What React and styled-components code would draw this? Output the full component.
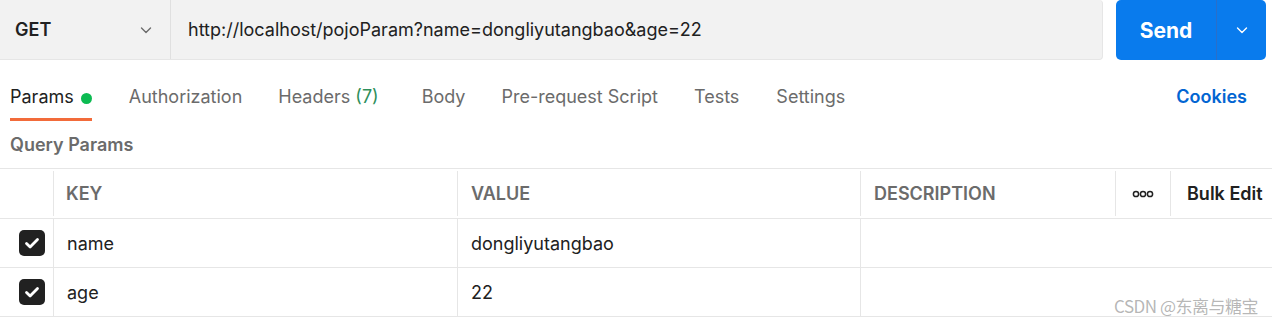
import React from "react";
import styled, { createGlobalStyle } from "styled-components";

const Global = createGlobalStyle`
  html, body { margin: 0; padding: 0; background: #fff; }
  body { font-family: Inter, "Noto Sans", "Noto Sans CJK SC", sans-serif; color: #212121; }
  * { box-sizing: border-box; }
`;

const Page = styled.div`
  width: 1272px;
  height: 322px;
  overflow: hidden;
  position: relative;
  background: #fff;
`;

const TopBar = styled.div`
  display: flex;
  align-items: stretch;
  height: 60px;
  gap: 13px;
  padding-right: 6px;
`;

const UrlBox = styled.div`
  flex: 1;
  display: flex;
  background: #f2f2f2;
  border: 1px solid #e6e6e6;
  border-left: none;
  border-top: none;
  border-radius: 0 4px 4px 0;
`;

const Method = styled.div`
  width: 171px;
  display: flex;
  align-items: center;
  justify-content: space-between;
  padding: 0 16px 0 15px;
  font-size: 18px;
  font-weight: 600;
  color: #212121;
  border-right: 1px solid #e0e0e0;
`;

const Url = styled.div`
  flex: 1;
  display: flex;
  align-items: center;
  padding-left: 17px;
  font-size: 18px;
  color: #212121;
`;

const SendGroup = styled.div`
  width: 150px;
  display: flex;
  background: #097bed;
  border-radius: 5px;
  color: #fff;
`;

const SendLabel = styled.div`
  width: 101px;
  display: flex;
  align-items: center;
  justify-content: center;
  font-size: 21px;
  font-weight: 700;
  border-right: 1px solid #2a6fc9;
`;

const SendCaret = styled.div`
  flex: 1;
  display: flex;
  align-items: center;
  justify-content: center;
`;

const Tabs = styled.div`
  display: flex;
  align-items: flex-start;
  height: 61px;
  padding: 26px 25px 0 10px;
`;

const Tab = styled.div`
  position: relative;
  height: 35px;
  margin-right: ${(p) => p.$gap}px;
  display: flex;
  align-items: flex-start;
  gap: 7px;
  font-size: 18px;
  color: ${(p) => (p.$active ? "#212121" : "#6b6b6b")};
  border-bottom: 3px solid ${(p) => (p.$active ? "#f26b3a" : "transparent")};
`;

const Dot = styled.span`
  width: 11px;
  height: 11px;
  border-radius: 50%;
  background: #0cbb52;
  margin-top: 7px;
`;

const Count = styled.span`
  color: #2f8f5b;
`;

const Spacer = styled.div`
  flex: 1;
`;

const Cookies = styled.div`
  font-size: 18px;
  font-weight: 600;
  color: #0265d2;
`;

const Section = styled.div`
  height: 47px;
  padding: 13px 0 0 10px;
  font-size: 18px;
  font-weight: 600;
  color: #6b6b6b;
`;

const Table = styled.div`
  border-top: 1px solid #e6e6e6;
`;

const Row = styled.div`
  display: grid;
  grid-template-columns: 53px 404px 403px 255px 55px 1fr;
  height: ${(p) => p.$h}px;
  border-bottom: 1px solid #e6e6e6;
`;

const Cell = styled.div`
  display: flex;
  align-items: center;
  padding-left: ${(p) => p.$pl ?? 13}px;
  border-left: ${(p) => (p.$first ? "none" : "1px solid #e6e6e6")};
  font-size: 18px;
  font-weight: ${(p) => (p.$head ? 600 : 400)};
  color: ${(p) => (p.$head ? "#6b6b6b" : "#212121")};
  justify-content: ${(p) => (p.$center ? "center" : "flex-start")};
`;

const HeadCell = styled(Cell)`
  margin: 2px 0;
`;

const BulkEdit = styled.span`
  color: #212121;
  font-weight: 600;
`;

const Check = styled.div`
  width: 26px;
  height: 26px;
  border-radius: 5px;
  background: #212121;
  display: flex;
  align-items: center;
  justify-content: center;
  margin-left: 7px;
`;

const Watermark = styled.div`
  position: absolute;
  right: 14px;
  bottom: 4px;
  font-size: 17px;
  color: rgba(120, 120, 120, 0.55);
  font-family: "Noto Sans CJK SC", sans-serif;
  letter-spacing: -0.5px;
`;

const Chevron = ({ color = "#6b6b6b", size = 16 }) => (
  <svg width={size} height={size} viewBox="0 0 16 16" fill="none">
    <path d="M3.5 6l4.5 4.5L12.5 6" stroke={color} strokeWidth="1.4" strokeLinecap="round" strokeLinejoin="round" />
  </svg>
);

const Dots = () => (
  <svg width="22" height="8" viewBox="0 0 22 8" fill="none">
    <circle cx="4" cy="4" r="2.6" stroke="#212121" strokeWidth="1.5" />
    <circle cx="11" cy="4" r="2.6" stroke="#212121" strokeWidth="1.5" />
    <circle cx="18" cy="4" r="2.6" stroke="#212121" strokeWidth="1.5" />
  </svg>
);

const Tick = () => (
  <svg width="18" height="18" viewBox="0 0 18 18" fill="none">
    <path d="M3.5 9.5l3.6 3.6L14.5 5.5" stroke="#fff" strokeWidth="2.8" strokeLinecap="round" strokeLinejoin="round" />
  </svg>
);

const rows = [
  { key: "name", value: "dongliyutangbao" },
  { key: "age", value: "22" },
];

const tabs = [
  { label: "Params", active: true, dot: true, gap: 37 },
  { label: "Authorization", gap: 36 },
  { label: "Headers", count: "(7)", gap: 43 },
  { label: "Body", gap: 36 },
  { label: "Pre-request Script", gap: 36 },
  { label: "Tests", gap: 37 },
  { label: "Settings", gap: 0 },
];

export default function App() {
  return (
    <Page>
      <Global />
      <TopBar>
        <UrlBox>
          <Method>
            GET
            <Chevron />
          </Method>
          <Url>http://localhost/pojoParam?name=dongliyutangbao&amp;age=22</Url>
        </UrlBox>
        <SendGroup>
          <SendLabel>Send</SendLabel>
          <SendCaret>
            <Chevron color="#fff" />
          </SendCaret>
        </SendGroup>
      </TopBar>
      <Tabs>
        {tabs.map((t) => (
          <Tab key={t.label} $active={t.active} $gap={t.gap}>
            <span>
              {t.label}
              {t.count && <Count> {t.count}</Count>}
            </span>
            {t.dot && <Dot />}
          </Tab>
        ))}
        <Spacer />
        <Cookies>Cookies</Cookies>
      </Tabs>
      <Section>Query Params</Section>
      <Table>
        <Row $h={50}>
          <HeadCell $first />
          <HeadCell $head $pl={12}>KEY</HeadCell>
          <HeadCell $head>VALUE</HeadCell>
          <HeadCell $head>DESCRIPTION</HeadCell>
          <HeadCell $center $pl={0}>
            <Dots />
          </HeadCell>
          <HeadCell $pl={16}>
            <BulkEdit>Bulk Edit</BulkEdit>
          </HeadCell>
        </Row>
        {rows.map((r) => (
          <Row key={r.key} $h={49}>
            <Cell $first $pl={12}>
              <Check>
                <Tick />
              </Check>
            </Cell>
            <Cell>{r.key}</Cell>
            <Cell>{r.value}</Cell>
            <Cell />
            <Cell $first />
            <Cell $first />
          </Row>
        ))}
      </Table>
      <Watermark>CSDN @东离与糖宝</Watermark>
    </Page>
  );
}
